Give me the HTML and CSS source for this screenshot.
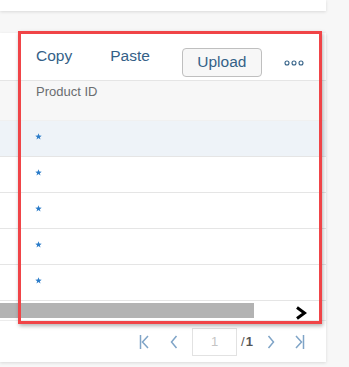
FILE: index.html
```html
<!DOCTYPE html>
<html lang="en">
<head>
    <meta charset="UTF-8">
    <title>Products table</title>
    <link rel="stylesheet" href="styles.css">
</head>
<body>
    <div class="top-card"></div>

    <div class="table-card">
        <div class="toolbar">
            <span class="tool-link copy">Copy</span>
            <span class="tool-link paste">Paste</span>
            <button class="upload-button">Upload</button>
            <span class="more">
                <svg width="20" height="6" viewBox="0 0 20 6">
                    <circle cx="3" cy="3" r="2" fill="none" stroke="#346187" stroke-width="1.1"/>
                    <circle cx="10" cy="3" r="2" fill="none" stroke="#346187" stroke-width="1.1"/>
                    <circle cx="17" cy="3" r="2" fill="none" stroke="#346187" stroke-width="1.1"/>
                </svg>
            </span>
        </div>

        <div class="header-row">Product ID</div>

        <div class="row selected"><svg class="required" width="7" height="7" viewBox="0 0 10 10"><path d="M5 0.5 L6.2 3.7 L9.6 3.8 L6.9 5.9 L7.9 9.3 L5 7.3 L2.1 9.3 L3.1 5.9 L0.4 3.8 L3.8 3.7 Z" fill="#2b7cc9"/></svg></div>
        <div class="row"><svg class="required" width="7" height="7" viewBox="0 0 10 10"><path d="M5 0.5 L6.2 3.7 L9.6 3.8 L6.9 5.9 L7.9 9.3 L5 7.3 L2.1 9.3 L3.1 5.9 L0.4 3.8 L3.8 3.7 Z" fill="#2b7cc9"/></svg></div>
        <div class="row"><svg class="required" width="7" height="7" viewBox="0 0 10 10"><path d="M5 0.5 L6.2 3.7 L9.6 3.8 L6.9 5.9 L7.9 9.3 L5 7.3 L2.1 9.3 L3.1 5.9 L0.4 3.8 L3.8 3.7 Z" fill="#2b7cc9"/></svg></div>
        <div class="row"><svg class="required" width="7" height="7" viewBox="0 0 10 10"><path d="M5 0.5 L6.2 3.7 L9.6 3.8 L6.9 5.9 L7.9 9.3 L5 7.3 L2.1 9.3 L3.1 5.9 L0.4 3.8 L3.8 3.7 Z" fill="#2b7cc9"/></svg></div>
        <div class="row"><svg class="required" width="7" height="7" viewBox="0 0 10 10"><path d="M5 0.5 L6.2 3.7 L9.6 3.8 L6.9 5.9 L7.9 9.3 L5 7.3 L2.1 9.3 L3.1 5.9 L0.4 3.8 L3.8 3.7 Z" fill="#2b7cc9"/></svg></div>

        <div class="scroll-row">
            <div class="scroll-thumb"></div>
            <svg class="scroll-arrow" width="12" height="14" viewBox="0 0 12 14">
                <path d="M2 1.5 L9.5 7 L2 12.5" fill="none" stroke="#000" stroke-width="3"/>
            </svg>
        </div>

        <div class="pager">
            <svg class="pager-icon first" width="10" height="16" viewBox="0 0 10 16">
                <path d="M1.5 1 V15 M9 2 L3.5 8 L9 14" fill="none" stroke="#7fa4c7" stroke-width="1.5"/>
            </svg>
            <svg class="pager-icon prev" width="8" height="16" viewBox="0 0 8 16">
                <path d="M6.5 2 L1.5 8 L6.5 14" fill="none" stroke="#7fa4c7" stroke-width="1.5"/>
            </svg>
            <div class="page-input">1</div>
            <span class="page-total"><span class="slash">/</span>1</span>
            <svg class="pager-icon next" width="8" height="16" viewBox="0 0 8 16">
                <path d="M1.5 2 L6.5 8 L1.5 14" fill="none" stroke="#7fa4c7" stroke-width="1.5"/>
            </svg>
            <svg class="pager-icon last" width="10" height="16" viewBox="0 0 10 16">
                <path d="M1 2 L6.5 8 L1 14 M8.5 1 V15" fill="none" stroke="#7fa4c7" stroke-width="1.5"/>
            </svg>
        </div>

        <div class="highlight"></div>
    </div>
</body>
</html>
```

FILE: styles.css
```css
body {
    margin: 0;
    background: #f7f7f7;
    font-family: "Liberation Sans", Arial, sans-serif;
    width: 349px;
    height: 367px;
    overflow: hidden;
}
.top-card {
    width: 326px;
    height: 11px;
    background: #fff;
    box-shadow: 0 1px 3px rgba(0, 0, 0, 0.12);
}
.table-card {
    position: relative;
    width: 326px;
    margin-top: 22px;
    background: #fff;
    box-shadow: 0 1px 3px rgba(0, 0, 0, 0.12);
}
.toolbar {
    height: 47px;
    display: flex;
    align-items: center;
    border-bottom: 1px solid #e5e5e5;
    padding-left: 36px;
}
.tool-link {
    font-size: 15.5px;
    color: #346187;
    margin-top: -1px;
}
.paste {
    margin-left: 38px;
}
.upload-button {
    margin-left: 32px;
    margin-top: 11px;
    width: 80px;
    height: 29px;
    background: #f7f7f7;
    border: 1px solid #bfbfbf;
    border-radius: 4px;
    font-family: inherit;
    font-size: 15.5px;
    color: #346187;
    padding: 0;
}
.more {
    margin-left: 22px;
    margin-top: 12px;
    display: flex;
}
.header-row {
    height: 36px;
    background: #f7f7f7;
    padding: 3px 0 0 36px;
    font-size: 13px;
    color: #6a6d70;
    border-bottom: 1px solid #f0f0f0;
}
.row {
    height: 35px;
    border-bottom: 1px solid #e5e5e5;
    padding-left: 35px;
    display: flex;
    align-items: center;
}
.row.selected {
    background: #eef3f8;
}
.required {
    margin-top: -4px;
}
.scroll-row {
    height: 19px;
    display: flex;
    align-items: center;
}
.scroll-thumb {
    width: 254px;
    height: 15px;
    background: #b3b3b3;
}
.scroll-arrow {
    margin-left: 41px;
    margin-top: 4px;
}
.pager {
    height: 41px;
    display: flex;
    align-items: center;
    padding-left: 139px;
    border-top: 1px solid #ececec;
}
.pager-icon.first {
    margin-right: 21px;
}
.pager-icon.prev {
    margin-right: 14px;
}
.page-input {
    width: 45px;
    height: 28px;
    border: 1px solid #e2e2e2;
    box-sizing: border-box;
    display: flex;
    align-items: center;
    justify-content: center;
    font-size: 13px;
    color: #c4c4c4;
}
.page-total {
    font-size: 13px;
    color: #555;
    font-weight: bold;
    white-space: nowrap;
    margin: 0 14px 0 4px;
}
.slash {
    font-weight: normal;
    margin-right: 1px;
}
.pager-icon.next {
    margin-right: 20px;
}
.highlight {
    position: absolute;
    left: 18px;
    top: -2px;
    width: 298px;
    height: 287px;
    border: 3px solid #f04447;
    box-shadow: 1px 2px 4px rgba(0, 0, 0, 0.3);
}
```
